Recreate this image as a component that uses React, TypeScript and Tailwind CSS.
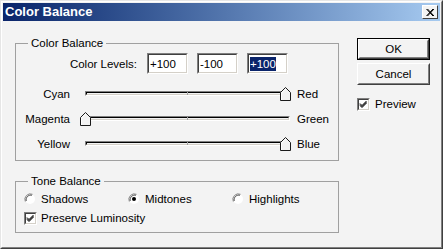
import React from 'react'

const sliders = [
  { left: 'Cyan', right: 'Red', value: 100 },
  { left: 'Magenta', right: 'Green', value: -100 },
  { left: 'Yellow', right: 'Blue', value: 100 },
]

function Thumb() {
  return (
    <svg width="12" height="15" viewBox="0 0 12 15">
      <polygon points="0.5,5.5 5.5,0.5 10.5,5.5 10.5,13.5 0.5,13.5" fill="#f3f3f3" stroke="#1a1a1a" />
      <polyline points="1.5,13 1.5,6 5.5,2" fill="none" stroke="#ffffff" />
    </svg>
  )
}

function Slider({ left, right, value }: { left: string; right: string; value: number }) {
  // -100..100 -> thumb offset on the track
  const x = -6 + ((value + 100) / 200) * 200
  return (
    <div className="flex items-center h-[25px]">
      <span className="w-[54px] text-right">{left}</span>
      <div className="relative ml-[15px] w-[205px] h-[5px] border border-t-[#808080] border-l-[#808080] border-r-white border-b-white">
        <div className="h-full border border-t-black border-l-black border-r-[#d4d0c8] border-b-[#d4d0c8] bg-[#f3f3f3]" />
        <div className="absolute left-[101px] top-0 h-full w-px bg-[#a0a0a0]" />
        <div className="absolute top-[-5px]" style={{ left: x }}>
          <Thumb />
        </div>
      </div>
      <span className="ml-[7px]">{right}</span>
    </div>
  )
}

function Field({ text, selected }: { text: string; selected?: boolean }) {
  return (
    <div className="w-[41px] h-[21px] border border-t-[#808080] border-l-[#808080] border-r-white border-b-white">
      <div className="h-full border border-t-[#404040] border-l-[#404040] border-r-[#d4d0c8] border-b-[#d4d0c8] bg-white flex items-center pl-[1px]">
        <span className={selected ? 'bg-[#0a246a] text-white leading-[14px]' : 'leading-[14px]'}>{text}</span>
      </div>
    </div>
  )
}

function Check() {
  return (
    <div className="w-[13px] h-[13px] border border-t-[#808080] border-l-[#808080] border-r-white border-b-white shrink-0">
      <div className="h-full border border-t-[#404040] border-l-[#404040] border-r-[#d4d0c8] border-b-[#d4d0c8] bg-white">
        <svg width="9" height="9" viewBox="0 0 9 9">
          <path d="M1 3.5 L3 5.5 L7.5 1 M1 4.5 L3 6.5 L7.5 2 M1 5.5 L3 7.5 L7.5 3" stroke="#000" strokeWidth="1" fill="none" />
        </svg>
      </div>
    </div>
  )
}

function Radio({ on }: { on?: boolean }) {
  return (
    <svg width="12" height="12" viewBox="0 0 12 12" className="shrink-0">
      <circle cx="6" cy="6" r="5" fill="#ffffff" />
      <path d="M1.3 8.5 A5.5 5.5 0 0 1 8.5 1.3" fill="none" stroke="#808080" />
      <path d="M2.3 7.8 A4.5 4.5 0 0 1 7.8 2.3" fill="none" stroke="#404040" />
      {on && <circle cx="6" cy="6" r="2" fill="#000" />}
    </svg>
  )
}

function Button({ label, primary }: { label: string; primary?: boolean }) {
  return (
    <div className={primary ? 'w-[73px] h-[22px] border border-black' : 'w-[73px] h-[22px]'}>
      <div className="h-full border border-t-white border-l-white border-r-[#404040] border-b-[#404040]">
        <div className="h-full flex items-center justify-center border border-t-[#f3f3f3] border-l-[#f3f3f3] border-r-[#808080] border-b-[#808080]">
          {label}
        </div>
      </div>
    </div>
  )
}

export default function App() {
  return (
    <div className="w-[443px] h-[249px] bg-[#f3f3f3] border border-t-[#e6e6e6] border-l-[#e6e6e6] border-r-[#404040] border-b-[#404040] font-['Liberation_Sans',Arial,sans-serif] text-[11.5px] text-black leading-[14px]">
      <div className="h-full border border-t-white border-l-white border-r-[#808080] border-b-[#808080] p-px flex flex-col">
        {/* title bar */}
        <div className="h-[18px] flex items-center justify-between bg-linear-to-r from-[#0a246a] to-[#a6caf0] pl-[2px] pr-[2px]">
          <span className="text-white font-bold text-[13px]">Color Balance</span>
          <div className="w-[16px] h-[14px] bg-[#f3f3f3] border border-t-white border-l-white border-r-[#404040] border-b-[#404040] flex items-center justify-center">
            <svg width="8" height="7" viewBox="0 0 8 7">
              <path d="M0.5 0 L7 7 M1.5 0 L8 7 M7 0 L0.5 7 M8 0 L1.5 7" stroke="#000" strokeWidth="1" />
            </svg>
          </div>
        </div>

        <div className="flex flex-1">
          <div className="pl-[12px] pt-[22px]">
            {/* color balance group */}
            <div className="relative w-[324px] h-[118px] border border-[#a0a0a0]">
              <span className="absolute left-[12px] top-[-8px] px-[3px] bg-[#f3f3f3]">Color Balance</span>
              <div className="flex items-center justify-end gap-[9px] pr-[50px] mt-[9px]">
                <span className="mr-[1px]">Color Levels:</span>
                <Field text="+100" />
                <Field text="-100" />
                <Field text="+100" selected />
              </div>
              <div className="mt-[7px]">
                {sliders.map((s) => (
                  <Slider key={s.left} left={s.left} right={s.right} value={s.value} />
                ))}
              </div>
            </div>

            {/* tone balance group */}
            <div className="relative w-[324px] h-[52px] mt-[20px] border border-[#a0a0a0]">
              <span className="absolute left-[12px] top-[-8px] px-[3px] bg-[#f3f3f3]">Tone Balance</span>
              <div className="flex items-center h-[14px] mt-[10px] pl-[8px]">
                <div className="flex items-center gap-[5px] w-[104px]">
                  <Radio />
                  <span>Shadows</span>
                </div>
                <div className="flex items-center gap-[5px] w-[104px]">
                  <Radio on />
                  <span>Midtones</span>
                </div>
                <div className="flex items-center gap-[5px]">
                  <Radio />
                  <span>Highlights</span>
                </div>
              </div>
              <div className="flex items-center gap-[4px] mt-[5px] pl-[8px]">
                <Check />
                <span>Preserve Luminosity</span>
              </div>
            </div>
          </div>

          <div className="ml-[18px] pt-[17px] flex flex-col">
            <Button label="OK" primary />
            <div className="mt-[3px]">
              <Button label="Cancel" />
            </div>
            <div className="flex items-center gap-[5px] mt-[12px]">
              <Check />
              <span>Preview</span>
            </div>
          </div>
        </div>
      </div>
    </div>
  )
}
